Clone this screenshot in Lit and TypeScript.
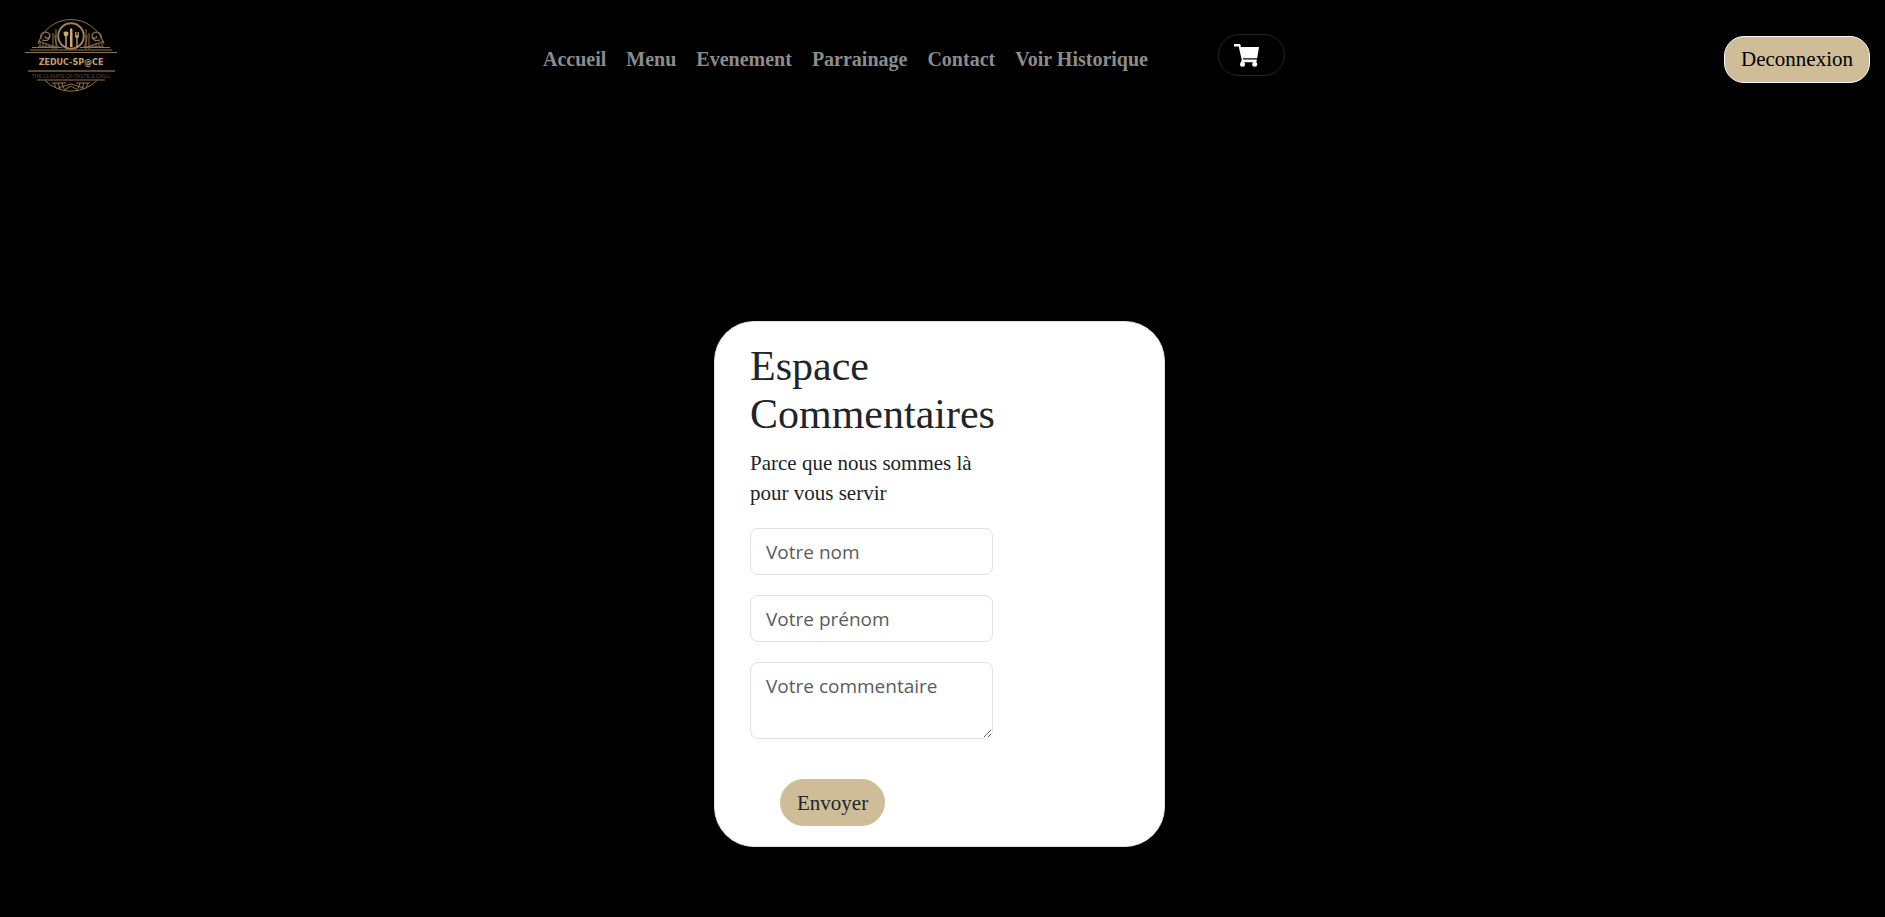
import { LitElement, html, css } from "lit";
import { customElement } from "lit/decorators.js";

const LINKS = ["Accueil", "Menu", "Evenement", "Parrainage", "Contact", "Voir Historique"];

@customElement("zeduc-logo")
export class ZeducLogo extends LitElement {
  static styles = css`
    :host {
      display: block;
    }
    .logo {
      display: block;
      width: 103px;
      height: 88px;
    }
    .name {
      font: bold 8px "DejaVu Sans", sans-serif;
      fill: #c4a06b;
    }
    .motto {
      font: 5px "Liberation Sans", sans-serif;
      fill: #5c4930;
    }
  `;

  render() {
    return html`
      <svg class="logo" viewBox="15 10 103 88" role="img" aria-label="Zeduc-Sp@ce">
        <g fill="none" stroke="#8f734b" stroke-width="1">
          <path d="M38 43A34.500 34.500 0 0 1 104 43" />
          <circle cx="71" cy="35" r="12.800" stroke="#a08155" stroke-width="2" />
          <g id="side">
            <path d="M56 48V28M53 48V32M59 47C56 44 55 39 55 34" />
            <path d="M41 38C39 31 48 29 50 34C50 38 45 38 45 35M50 34C50 40 46 40 42 39" stroke-width="1.200" />
            <path d="M38 40L55 46M40 41V47M43 42V47M46 43V47M49 44V47M38 46H58" />
          </g>
          <g transform="translate(142 0) scale(-1 1)">
            <path d="M56 48V28M53 48V32M59 47C56 44 55 39 55 34" />
            <path d="M41 38C39 31 48 29 50 34C50 38 45 38 45 35M50 34C50 40 46 40 42 39" stroke-width="1.200" />
            <path d="M38 40L55 46M40 41V47M43 42V47M46 43V47M49 44V47M38 46H58" />
          </g>
          <path d="M32 46.500H62M80 46.500H110M30 49H112M25 51.500H117" />
          <path d="M28 70H115" stroke="#b39160" />
          <path d="M37 79H105M45 79.500A37 37 0 0 0 97 79.500" />
          <path d="M52 82H66M76 82H90M56 87L54 82M60 88L58 82M64 88L62 82M78 88L80 82M82 88L84 82M86 87L88 82M58 87L71 83L84 87M64 89L71 85L78 89" />
        </g>
        <g fill="#d0aa72">
          <path d="M63.500 31.500C63.500 33.500 64.300 35 65.300 35.500V46H66.700V35.500C67.700 35 68.500 33.500 68.500 31.500C67.500 30 64.500 30 63.500 31.500Z" />
          <path d="M70 46V28Q72.500 26 72.500 30V46Z" />
          <path d="M75 31V35Q75 36.500 76.400 37V46H77.600V37Q79 36.500 79 35V31H78.200V34.500H77.400V31H76.600V34.500H75.800V31Z" />
        </g>
        <text class="name" x="71" y="64" text-anchor="middle">ZEDUC-SP@CE</text>
        <text class="motto" x="71" y="77" text-anchor="middle">THE CLIMATE OF TASTE &amp; CHILL</text>
      </svg>
    `;
  }
}

@customElement("app-root")
export class AppRoot extends LitElement {
  static styles = css`
    :host {
      display: flex;
      flex-direction: column;
      min-height: 100vh;
      background: #000;
      color: #212529;
      font: 20px/30px "Liberation Serif", serif;
    }
    * {
      box-sizing: border-box;
    }
    .bar {
      display: flex;
      flex-wrap: wrap;
      align-items: center;
      justify-content: space-between;
      padding: 11px 15px 10px;
    }
    .menu {
      display: flex;
      flex-wrap: wrap;
      align-items: center;
      padding-right: 24px;
    }
    .links {
      display: flex;
      flex-wrap: wrap;
      margin: 0;
      padding: 8px 0 0;
      list-style: none;
    }
    .link {
      display: block;
      padding: 0 10px;
      color: #8c8c8c;
      font-weight: bold;
      text-decoration: none;
    }
    .cart {
      display: block;
      width: 67px;
      height: 42px;
      margin-left: 60px;
      padding: 0 15px;
      border: 1px solid #212529;
      border-radius: 21px;
      background: #000;
      cursor: pointer;
    }
    .cart-icon {
      display: block;
      width: 25px;
      height: 23px;
    }
    .pill {
      height: 47px;
      padding: 0 16px;
      border: 1px solid #cfbd97;
      border-radius: 24px;
      background: #cfbd97;
      color: #212529;
      font: 21px/30px "Liberation Serif", serif;
      cursor: pointer;
    }
    .logout {
      margin-top: 8px;
      border-color: #f8f9fa;
      border-radius: 20px;
      color: #000;
    }
    .content {
      display: flex;
      justify-content: center;
      padding: 212px 6px 40px 0;
    }
    .card {
      width: 451px;
      padding: 20px 35px;
      border: 1px solid #dee2e6;
      border-radius: 40px;
      background: #fff;
    }
    .form {
      display: flex;
      flex-direction: column;
      align-items: flex-start;
      width: 243px;
    }
    .title {
      margin: 0 0 10px;
      font-size: 42px;
      font-weight: normal;
      line-height: 48px;
    }
    .lead {
      margin: 0 0 20px;
      font-size: 21px;
    }
    .field {
      display: block;
      width: 100%;
      height: 47px;
      margin: 0 0 20px;
      padding: 8px 15px;
      border: 1px solid #dee2e6;
      border-radius: 8px;
      background: #fff;
      color: #212529;
      font: 19px/30px "Open Sans", sans-serif;
    }
    .field::placeholder {
      color: #595c5f;
      opacity: 1;
    }
    .area {
      height: 77px;
      margin-bottom: 40px;
      resize: vertical;
    }
    .send {
      margin-left: 30px;
    }
  `;

  render() {
    return html`
      <header class="bar">
        <zeduc-logo></zeduc-logo>
        <nav class="menu">
          <ul class="links">
            ${LINKS.map((name) => html`<li><a class="link" href="#">${name}</a></li>`)}
          </ul>
          <button class="cart" type="button" aria-label="Panier">
            <svg class="cart-icon" viewBox="0 0 25 23" aria-hidden="true">
              <path d="M0 0H6.200L6.900 3H25L23.200 14.300H8.900L9.200 15.600H22.900L22.400 18.300H6.800L7.800 16L4.700 2.600H0Z" fill="#fff" />
              <circle cx="8.500" cy="20.200" r="2.500" fill="#fff" />
              <circle cx="20.700" cy="20.200" r="2.500" fill="#fff" />
            </svg>
          </button>
        </nav>
        <button class="pill logout" type="button">Deconnexion</button>
      </header>
      <main class="content">
        <section class="card">
          <form class="form" @submit=${(e: Event) => e.preventDefault()}>
            <h1 class="title">Espace Commentaires</h1>
            <p class="lead">Parce que nous sommes là pour vous servir</p>
            <label for="nom" hidden>Votre nom</label>
            <input class="field" id="nom" type="text" placeholder="Votre nom" />
            <label for="prenom" hidden>Votre prénom</label>
            <input class="field" id="prenom" type="text" placeholder="Votre prénom" />
            <label for="commentaire" hidden>Votre commentaire</label>
            <textarea class="field area" id="commentaire" placeholder="Votre commentaire"></textarea>
            <button class="pill send" type="submit">Envoyer</button>
          </form>
        </section>
      </main>
    `;
  }
}
